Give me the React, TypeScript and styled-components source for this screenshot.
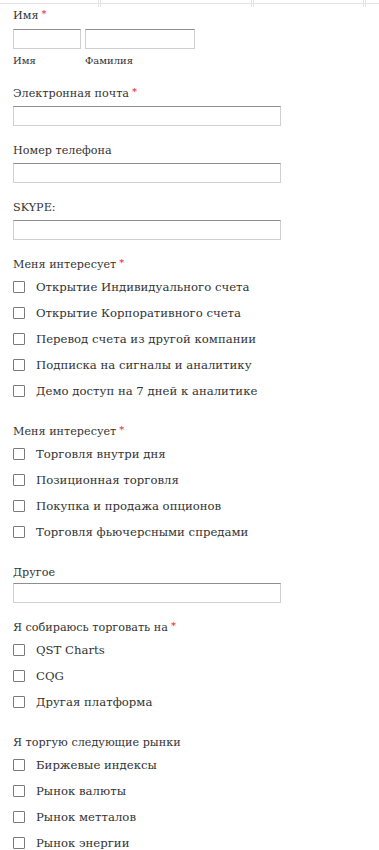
import React from 'react';
import styled, { createGlobalStyle } from 'styled-components';

const GlobalStyle = createGlobalStyle`
  body {
    margin: 0;
    background: #fff;
    font-family: "DejaVu Serif", "Liberation Serif", serif;
    color: #333;
  }
`;

const TableEdge = styled.div`
  display: flex;
  height: 7px;
  background: linear-gradient(#e4e4e4, #e4e4e4) 0 3px / 100% 1px no-repeat;
`;

const EdgeCell = styled.div<{ $w: number }>`
  box-sizing: border-box;
  width: ${(p) => p.$w}px;
  border-right: 3px double #e4e4e4;
`;

const Form = styled.form`
  padding: 1px 13px 0 13px;
`;

const Field = styled.div<{ $gap?: number }>`
  margin-bottom: ${(p) => p.$gap ?? 16.5}px;
`;

const Label = styled.div<{ $mb?: number }>`
  height: 16px;
  font-size: 11.2px;
  line-height: 16px;
  margin-bottom: ${(p) => p.$mb ?? 4.5}px;
`;

const Required = styled.span`
  color: #e02020;
  font-size: 10px;
  line-height: 1;
  margin-left: 3px;
  vertical-align: 2px;
`;

const Input = styled.input<{ $width?: number }>`
  display: block;
  box-sizing: border-box;
  width: ${(p) => p.$width ?? 268}px;
  height: 20px;
  margin: 0;
  padding: 2px 4px;
  border: 1px solid #d0d0d0;
  border-top-color: #8e8e8e;
  border-radius: 0;
  background: #fff;
  font: 12px "DejaVu Serif", serif;
`;

const NameRow = styled.div`
  display: flex;
  gap: 4px;
`;

const NamePart = styled.div`
  display: flex;
  flex-direction: column;
  gap: 5px;
`;

const SubLabel = styled.span`
  height: 14px;
  font-size: 10px;
  line-height: 14px;
`;

const Option = styled.label`
  display: flex;
  align-items: center;
  height: 26px;
  font-size: 11.7px;
`;

const Box = styled.span`
  box-sizing: border-box;
  width: 12px;
  height: 12px;
  border: 1px solid #7a7a7a;
  border-radius: 1px;
  margin-right: 11px;
  flex-shrink: 0;
`;

const Req = () => <Required>*</Required>;

const CheckGroup = ({ title, required, options }: { title: string; required?: boolean; options: string[] }) => (
  <Field $gap={19.5}>
    <Label $mb={1.5}>
      {title}
      {required && <Req />}
    </Label>
    {options.map((o) => (
      <Option key={o}>
        <Box />
        {o}
      </Option>
    ))}
  </Field>
);

const App = () => (
  <>
    <GlobalStyle />
    <TableEdge>
      <EdgeCell $w={101} />
      <EdgeCell $w={153} />
      <EdgeCell $w={112} />
    </TableEdge>
    <Form>
      <Field $gap={18}>
        <Label>
          Имя<Req />
        </Label>
        <NameRow>
          <NamePart>
            <Input $width={68} />
            <SubLabel>Имя</SubLabel>
          </NamePart>
          <NamePart>
            <Input $width={110} />
            <SubLabel>Фамилия</SubLabel>
          </NamePart>
        </NameRow>
      </Field>
      <Field>
        <Label>
          Электронная почта<Req />
        </Label>
        <Input />
      </Field>
      <Field>
        <Label>Номер телефона</Label>
        <Input />
      </Field>
      <Field>
        <Label>SKYPE:</Label>
        <Input />
      </Field>
      <CheckGroup
        title="Меня интересует"
        required
        options={[
          'Открытие Индивидуального счета',
          'Открытие Корпоративного счета',
          'Перевод счета из другой компании',
          'Подписка на сигналы и аналитику',
          'Демо доступ на 7 дней к аналитике',
        ]}
      />
      <CheckGroup
        title="Меня интересует"
        required
        options={[
          'Торговля внутри дня',
          'Позиционная торговля',
          'Покупка и продажа опционов',
          'Торговля фьючерсными спредами',
        ]}
      />
      <Field>
        <Label $mb={2.5}>Другое</Label>
        <Input />
      </Field>
      <CheckGroup
        title="Я собираюсь торговать на"
        required
        options={['QST Charts', 'CQG', 'Другая платформа']}
      />
      <CheckGroup
        title="Я торгую следующие рынки"
        options={['Биржевые индексы', 'Рынок валюты', 'Рынок метталов', 'Рынок энергии']}
      />
    </Form>
  </>
);

export default App;
